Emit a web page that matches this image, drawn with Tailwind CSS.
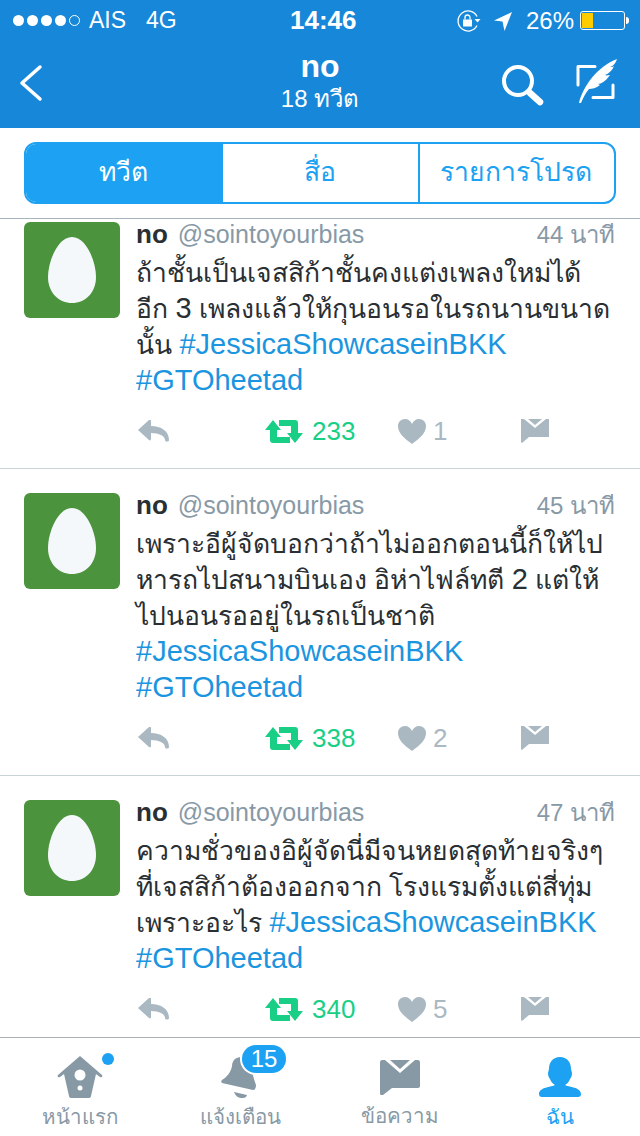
<!DOCTYPE html>
<html lang="th">
<head>
    <meta charset="UTF-8">
    <meta name="viewport" content="width=device-width, initial-scale=1.0">
    <title>no - ทวีต</title>
    <script src="https://cdn.jsdelivr.net/npm/@tailwindcss/browser@4"></script>
</head>
<body class="bg-white font-['Liberation_Sans','Noto_Sans',sans-serif]">
    <div class="w-[640px] h-[1136px] flex flex-col overflow-hidden">

        <!-- status bar + nav -->
        <header class="h-[128px] shrink-0 bg-[#1787d9] text-white flex flex-col">
            <div class="h-[40px] flex items-center pl-[13px] pr-[11px] pt-[1px] relative text-[24px]">
                <div class="flex items-center gap-[3px]">
                    <span class="w-[11px] h-[11px] rounded-full bg-white"></span>
                    <span class="w-[11px] h-[11px] rounded-full bg-white"></span>
                    <span class="w-[11px] h-[11px] rounded-full bg-white"></span>
                    <span class="w-[11px] h-[11px] rounded-full bg-white"></span>
                    <span class="w-[11px] h-[11px] rounded-full border border-white"></span>
                </div>
                <span class="ml-[9px] text-[23px]">AIS</span>
                <span class="ml-[20px] text-[23px]">4G</span>
                <span class="absolute left-[290px] font-bold text-[26px]">14:46</span>
                <div class="ml-auto flex items-center">
                    <svg width="24" height="22" viewBox="0 0 24 22" fill="none" stroke="white" stroke-width="1.3">
                        <path d="M20 15.500A10 10 0 1 1 20 6.500"/>
                        <path d="M17.500 9h6l-3 3.500z" fill="white" stroke="none"/>
                        <rect x="6" y="9.500" width="9" height="7" fill="white" stroke="none"/>
                        <path d="M8 9.500V7.500a2.500 2.500 0 0 1 5 0v2"/>
                    </svg>
                    <svg class="ml-[13px]" width="18" height="20" viewBox="0 0 18 20" fill="white"><path d="M18 1 0 9.500l8.500 1L10.500 20z"/></svg>
                    <span class="ml-[14px]">26%</span>
                    <div class="ml-[6px] w-[45px] h-[19px] rounded-[3px] border border-white p-[1px]">
                        <div class="w-[11px] h-full bg-[#ffcc00]"></div>
                    </div>
                    <span class="w-[3px] h-[7px] bg-white rounded-r-sm ml-[1px]"></span>
                </div>
            </div>
            <div class="relative flex-1 flex flex-col items-center">
                <span class="text-[32px] font-bold leading-[36px] mt-[8px]">no</span>
                <span class="text-[24px] leading-[28px] mt-[1px]">18 ทวีต</span>
                <svg class="absolute left-[19px] top-[24px]" width="24" height="38" viewBox="0 0 24 38" fill="none" stroke="white" stroke-width="3.500" stroke-linecap="round" stroke-linejoin="round"><path d="M21 3 3 19l18 16"/></svg>
                <svg class="absolute left-[501px] top-[23px]" width="44" height="44" viewBox="0 0 44 44" fill="none" stroke="white"><circle cx="17" cy="18" r="14" stroke-width="4"/><path d="M29 30 39 39" stroke-width="6.500" stroke-linecap="round"/></svg>
                <svg class="absolute left-[574px] top-[18px]" width="44" height="46" viewBox="0 0 44 46" fill="none">
                    <path d="M21 8.500H4V27M19 39.500h20V27" stroke="white" stroke-width="3" stroke-linecap="round" stroke-linejoin="round"/>
                    <path d="M5 45C9 28 24 8 43 1c-1 4-4 7-7 8 1 0 3 0 4-1-2 5-6 8-9 9 2 1 3 0 5 0-4 6-9 9-12 9l2 1c-4 3-8 4-11 4-4 5-6 9-8 14z" fill="white"/>
                </svg>
            </div>
        </header>

        <!-- tabs -->
        <div class="h-[91px] shrink-0 px-[24px] pt-[14px] border-b border-[#a8b4bd]">
            <div class="h-[62px] flex rounded-[12px] border-2 border-[#1da1f2] text-[#1da1f2] text-[26.5px] overflow-hidden">
                <div class="w-[197px] bg-[#1da1f2] text-white flex items-center justify-center pr-[3px]">ทวีต</div>
                <div class="w-[197px] flex items-center justify-center border-r-2 border-[#1da1f2] pr-[2px]">สื่อ</div>
                <div class="flex-1 flex items-center justify-center pr-[2px]">รายการโปรด</div>
            </div>
        </div>

        <!-- tweets -->
        <main class="flex-1 min-h-0 overflow-hidden">

            <article class="h-[250px] border-b border-[#c8d2d9] pl-[24px] pt-[3px] flex">
                <div class="w-[96px] h-[96px] rounded-[6px] bg-[#4b933c] flex items-center justify-center shrink-0">
                    <svg width="48" height="66" viewBox="0 0 48 66"><path d="M24 0C38 0 48 24 48 40 48 56 37 66 24 66 11 66 0 56 0 40 0 24 10 0 24 0z" fill="#f5f8fa"/></svg>
                </div>
                <div class="ml-[16px] w-[480px] -mt-[3px]">
                    <div class="flex items-baseline h-[30px] leading-[30px]">
                        <span class="text-[26px] font-bold text-[#292f33]">no</span>
                        <span class="text-[25px] text-[#8899a6] ml-[10px]">@sointoyourbias</span>
                        <span class="text-[24px] text-[#8899a6] ml-auto mr-[1px]">44 นาที</span>
                    </div>
                    <p class="text-[26.5px] leading-[36px] text-[#292f33] mt-[6px] whitespace-nowrap">ถ้าชั้นเป็นเจสสิก้าชั้นคงแต่งเพลงใหม่ได้<br>อีก <span class="text-[29px] leading-[30px]">3</span> เพลงแล้วให้กุนอนรอในรถนานขนาด<br>นั้น <span class="text-[29px] leading-[30px] text-[#1b95e0]">#JessicaShowcaseinBKK</span><br><span class="text-[29px] leading-[30px] text-[#1b95e0]">#GTOheetad</span></p>
                    <div class="flex items-center h-[28px] mt-[18px] text-[26px] text-[#aab8c2]">
                        <div class="w-[129px] pl-[2px]"><svg width="31" height="22" viewBox="0 0 31 22" fill="#aab8c2"><path d="M0 10 11 0c1-1 2 0 2 1v5c10 0 18 5 18 14 0 2-4 2-4 0 0-4-6-7-14-7v6c0 1-1 2-2 1z"/></svg></div>
                        <div class="w-[133px] flex items-center">
                            <svg width="38" height="23" viewBox="0 0 38 23" fill="#19cf86"><path d="M8 0 16 10H12V17H25V23H8Q5 23 5 20V10H0zM14 0H30Q33 0 33 3V13H38L30 23 22 13H26V6H14z"/></svg>
                            <span class="ml-[9px] text-[#19cf86]">233</span>
                        </div>
                        <div class="w-[123px] flex items-center">
                            <svg width="28" height="25" viewBox="0 0 28 25" fill="#aab8c2"><path d="M14 25C6 19 0 14 0 7c0-4 3-7 7-7 3 0 6 2 7 5 1-3 4-5 7-5 4 0 7 3 7 7 0 7-6 12-14 18z"/></svg>
                            <span class="ml-[7px]">1</span>
                        </div>
                        <svg width="28" height="24" viewBox="0 0 28 24" fill="#aab8c2"><path d="M0 0h3l11 9 11-9h3v18H8l-7 6-1-1zM7 0h14l-7 6z"/></svg>
                    </div>
                </div>
            </article>

            <article class="h-[307px] border-b border-[#c8d2d9] pl-[24px] pt-[24px] flex">
                <div class="w-[96px] h-[96px] rounded-[6px] bg-[#4b933c] flex items-center justify-center shrink-0">
                    <svg width="48" height="66" viewBox="0 0 48 66"><path d="M24 0C38 0 48 24 48 40 48 56 37 66 24 66 11 66 0 56 0 40 0 24 10 0 24 0z" fill="#f5f8fa"/></svg>
                </div>
                <div class="ml-[16px] w-[480px] -mt-[3px]">
                    <div class="flex items-baseline h-[30px] leading-[30px]">
                        <span class="text-[26px] font-bold text-[#292f33]">no</span>
                        <span class="text-[25px] text-[#8899a6] ml-[10px]">@sointoyourbias</span>
                        <span class="text-[24px] text-[#8899a6] ml-auto mr-[1px]">45 นาที</span>
                    </div>
                    <p class="text-[26.5px] leading-[36px] text-[#292f33] mt-[6px] whitespace-nowrap">เพราะอีผู้จัดบอกว่าถ้าไม่ออกตอนนี้ก็ให้ไป<br>หารถไปสนามบินเอง อิห่าไฟล์ทตี <span class="text-[29px] leading-[30px]">2</span> แต่ให้<br>ไปนอนรออยู่ในรถเป็นชาติ<br><span class="text-[29px] leading-[30px] text-[#1b95e0]">#JessicaShowcaseinBKK</span><br><span class="text-[29px] leading-[30px] text-[#1b95e0]">#GTOheetad</span></p>
                    <div class="flex items-center h-[28px] mt-[18px] text-[26px] text-[#aab8c2]">
                        <div class="w-[129px] pl-[2px]"><svg width="31" height="22" viewBox="0 0 31 22" fill="#aab8c2"><path d="M0 10 11 0c1-1 2 0 2 1v5c10 0 18 5 18 14 0 2-4 2-4 0 0-4-6-7-14-7v6c0 1-1 2-2 1z"/></svg></div>
                        <div class="w-[133px] flex items-center">
                            <svg width="38" height="23" viewBox="0 0 38 23" fill="#19cf86"><path d="M8 0 16 10H12V17H25V23H8Q5 23 5 20V10H0zM14 0H30Q33 0 33 3V13H38L30 23 22 13H26V6H14z"/></svg>
                            <span class="ml-[9px] text-[#19cf86]">338</span>
                        </div>
                        <div class="w-[123px] flex items-center">
                            <svg width="28" height="25" viewBox="0 0 28 25" fill="#aab8c2"><path d="M14 25C6 19 0 14 0 7c0-4 3-7 7-7 3 0 6 2 7 5 1-3 4-5 7-5 4 0 7 3 7 7 0 7-6 12-14 18z"/></svg>
                            <span class="ml-[7px]">2</span>
                        </div>
                        <svg width="28" height="24" viewBox="0 0 28 24" fill="#aab8c2"><path d="M0 0h3l11 9 11-9h3v18H8l-7 6-1-1zM7 0h14l-7 6z"/></svg>
                    </div>
                </div>
            </article>

            <article class="pl-[24px] pt-[24px] flex">
                <div class="w-[96px] h-[96px] rounded-[6px] bg-[#4b933c] flex items-center justify-center shrink-0">
                    <svg width="48" height="66" viewBox="0 0 48 66"><path d="M24 0C38 0 48 24 48 40 48 56 37 66 24 66 11 66 0 56 0 40 0 24 10 0 24 0z" fill="#f5f8fa"/></svg>
                </div>
                <div class="ml-[16px] w-[480px] -mt-[3px]">
                    <div class="flex items-baseline h-[30px] leading-[30px]">
                        <span class="text-[26px] font-bold text-[#292f33]">no</span>
                        <span class="text-[25px] text-[#8899a6] ml-[10px]">@sointoyourbias</span>
                        <span class="text-[24px] text-[#8899a6] ml-auto mr-[1px]">47 นาที</span>
                    </div>
                    <p class="text-[26.5px] leading-[36px] text-[#292f33] mt-[6px] whitespace-nowrap">ความชั่วของอิผู้จัดนี่มีจนหยดสุดท้ายจริงๆ<br>ที่เจสสิก้าต้องออกจาก โรงแรมตั้งแต่สี่ทุ่ม<br>เพราะอะไร <span class="text-[29px] leading-[30px] text-[#1b95e0]">#JessicaShowcaseinBKK</span><br><span class="text-[29px] leading-[30px] text-[#1b95e0]">#GTOheetad</span></p>
                    <div class="flex items-center h-[28px] mt-[18px] text-[26px] text-[#aab8c2]">
                        <div class="w-[129px] pl-[2px]"><svg width="31" height="22" viewBox="0 0 31 22" fill="#aab8c2"><path d="M0 10 11 0c1-1 2 0 2 1v5c10 0 18 5 18 14 0 2-4 2-4 0 0-4-6-7-14-7v6c0 1-1 2-2 1z"/></svg></div>
                        <div class="w-[133px] flex items-center">
                            <svg width="38" height="23" viewBox="0 0 38 23" fill="#19cf86"><path d="M8 0 16 10H12V17H25V23H8Q5 23 5 20V10H0zM14 0H30Q33 0 33 3V13H38L30 23 22 13H26V6H14z"/></svg>
                            <span class="ml-[9px] text-[#19cf86]">340</span>
                        </div>
                        <div class="w-[123px] flex items-center">
                            <svg width="28" height="25" viewBox="0 0 28 25" fill="#aab8c2"><path d="M14 25C6 19 0 14 0 7c0-4 3-7 7-7 3 0 6 2 7 5 1-3 4-5 7-5 4 0 7 3 7 7 0 7-6 12-14 18z"/></svg>
                            <span class="ml-[7px]">5</span>
                        </div>
                        <svg width="28" height="24" viewBox="0 0 28 24" fill="#aab8c2"><path d="M0 0h3l11 9 11-9h3v18H8l-7 6-1-1zM7 0h14l-7 6z"/></svg>
                    </div>
                </div>
            </article>
        </main>

        <!-- tab bar -->
        <nav class="h-[99px] shrink-0 border-t border-[#a8b0b6] bg-white grid grid-cols-4 text-[20.5px] text-[#8899a6]">
            <div class="relative flex flex-col items-center pt-[18px]">
                <svg width="46" height="42" viewBox="0 0 46 42" fill="#8899a6"><path d="M23 0 45 19c1 1 0 3-2 2l-4-3-5 22c0 1-1 2-2 2H14c-1 0-2-1-2-2L7 18l-4 3c-2 1-3-1-2-2z"/><circle cx="23" cy="19" r="5.500" fill="white"/><circle cx="23" cy="32" r="2.500" fill="white"/></svg>
                <span class="leading-[26px] mt-[6px]">หน้าแรก</span>
                <span class="absolute left-[102px] top-[15px] w-[12px] h-[12px] rounded-full bg-[#1da1f2]"></span>
            </div>
            <div class="relative flex flex-col items-center pt-[19px]">
                <svg width="38" height="42" viewBox="0 0 38 42" fill="#8899a6"><path d="M14 2c4-3 10-2 13 2 3 4 5 16 8 24 0 3-1 5-3 5L1 26c-1-1-1-2 0-3 5-3 9-8 10-14 0-3 1-5 3-7z"/><path d="M13 35l13 3c-1 3-3 3-6 3-3 0-6-3-7-6z"/></svg>
                <span class="leading-[26px] mt-[5px]">แจ้งเตือน</span>
                <span class="absolute left-[82px] top-[7px] h-[28px] min-w-[44px] px-[2px] rounded-full bg-[#1da1f2] text-white text-[24px] leading-[28px] text-center ring-2 ring-white">15</span>
            </div>
            <div class="flex flex-col items-center pt-[22px]">
                <svg width="40" height="35" viewBox="0 0 40 35" fill="#8899a6"><path d="M0 2c0-1 1-2 2-2h3l15 13L35 0h3c1 0 2 1 2 2v24c0 1-1 2-2 2H12l-9 7c-2 1-3 0-3-2zM10 0h20L20 9z"/></svg>
                <span class="leading-[26px] mt-[8px]">ข้อความ</span>
            </div>
            <div class="flex flex-col items-center pt-[19px] text-[#1da1f2]">
                <svg width="42" height="40" viewBox="0 0 42 40" fill="#1da1f2"><path d="M21 0c7 0 11 5 11 12l1 4c0 3-1 5-2 6-1 3-3 5-5 6 3 2 16 2 16 9 0 2-1 3-3 3H3c-2 0-3-1-3-3 0-7 13-7 16-9-2-1-4-3-5-6-1-1-2-3-2-6l1-4c0-7 4-12 11-12z"/></svg>
                <span class="leading-[26px] mt-[7px]">ฉัน</span>
            </div>
        </nav>
    </div>
</body>
</html>
